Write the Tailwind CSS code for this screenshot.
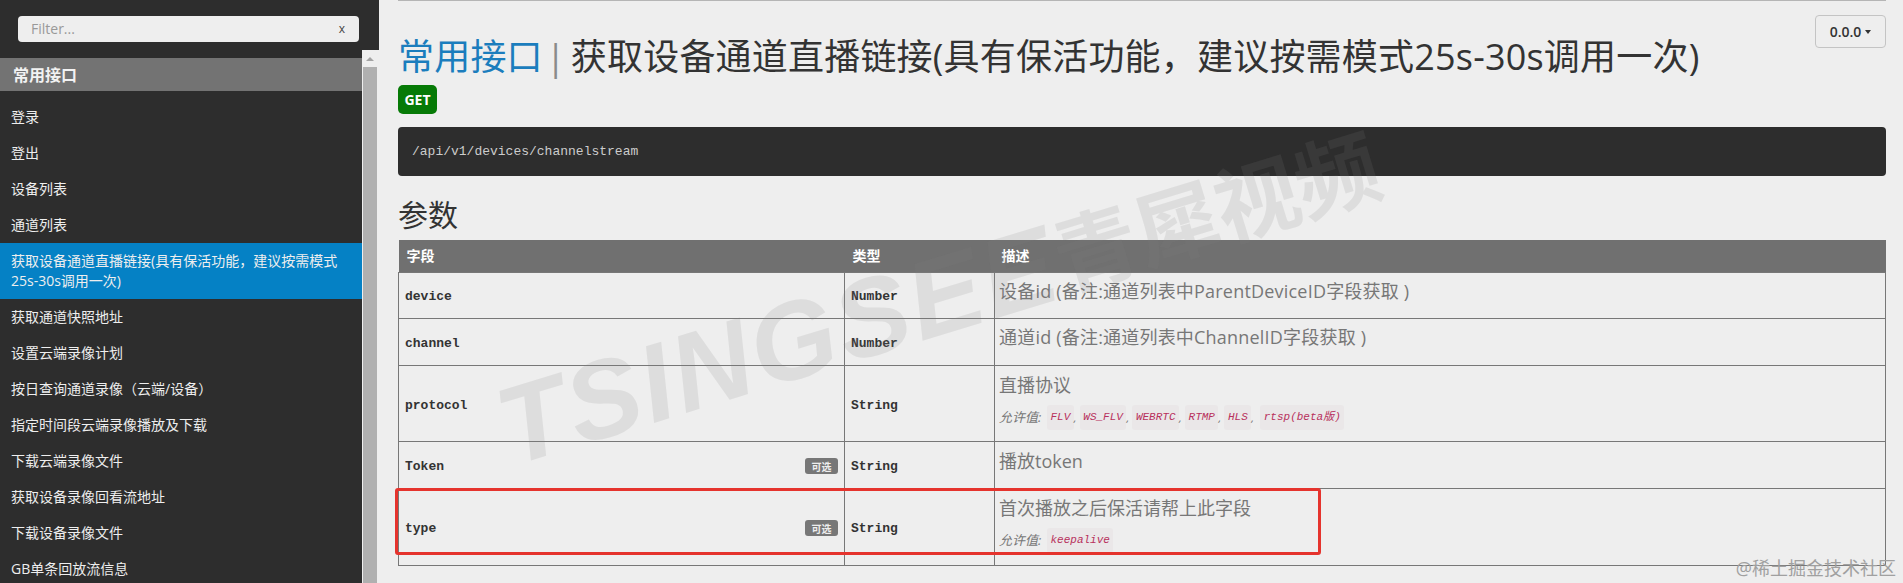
<!DOCTYPE html>
<html lang="zh-CN">
  <head>
    <meta charset="UTF-8" />
    <meta name="viewport" content="width=device-width, initial-scale=1.0" />
    <title>接口文档</title>
    <script src="https://cdn.jsdelivr.net/npm/@tailwindcss/browser@4"></script>
  </head>
  <body class="relative flex h-screen overflow-hidden bg-[#eeeeee] font-['Open_Sans','Noto_Sans_CJK_SC',sans-serif]">
    <!-- Sidebar -->
    <aside class="flex w-[379px] shrink-0 flex-col bg-[#2d2d2d]">
      <div class="h-[50px] shrink-0 pl-[18px] pr-[20px] pt-[16px]">
        <div class="flex h-[26px] items-center justify-between rounded-[4px] bg-[#eeeeee] pl-[13px] pr-[14px] text-sm">
          <span class="text-[#999999]">Filter...</span>
          <span class="text-xs text-[#444444]">x</span>
        </div>
      </div>
      <div class="flex min-h-0 flex-1">
        <nav class="min-w-0 flex-1 pt-[8px] text-sm leading-5 text-[#eeeeee]">
          <h2 class="flex h-[33px] items-center bg-[#737373] pl-[13px] text-base font-bold text-[#f2f2f2]">常用接口</h2>
          <ul class="pt-[8px]">
            <li class="px-[11px] py-2">登录</li>
            <li class="px-[11px] py-2">登出</li>
            <li class="px-[11px] py-2">设备列表</li>
            <li class="px-[11px] py-2">通道列表</li>
            <li class="bg-[#0581c5] px-[11px] py-2">获取设备通道直播链接(具有保活功能，建议按需模式<br />25s-30s调用一次)</li>
            <li class="px-[11px] py-2">获取通道快照地址</li>
            <li class="px-[11px] py-2">设置云端录像计划</li>
            <li class="px-[11px] py-2">按日查询通道录像（云端/设备）</li>
            <li class="px-[11px] py-2">指定时间段云端录像播放及下载</li>
            <li class="px-[11px] py-2">下载云端录像文件</li>
            <li class="px-[11px] py-2">获取设备录像回看流地址</li>
            <li class="px-[11px] py-2">下载设备录像文件</li>
            <li class="px-[11px] py-2">GB单条回放流信息</li>
          </ul>
        </nav>
        <!-- Scrollbar -->
        <div class="flex w-[17px] shrink-0 flex-col bg-[#eeeeee] pl-[1px] pr-[2px]">
          <div class="flex h-[17px] items-center justify-center">
            <div class="h-0 w-0 border-x-[4px] border-b-[4px] border-x-transparent border-b-[#a3a3a3]"></div>
          </div>
          <div class="flex-1 bg-[#b0b0b0]"></div>
        </div>
      </div>
    </aside>

    <!-- Main Content -->
    <main class="min-w-0 flex-1 pl-[19px] pr-[17px]">
      <article class="w-[1488px] border-t border-[#b5b5b5]">
        <button class="float-right mt-[14px] flex h-[33px] w-[71px] items-center justify-center gap-[4px] rounded-[4px] border border-[#c4c4c4] text-sm font-semibold text-[#333333]">
          0.0.0
          <span class="h-0 w-0 border-x-[3.5px] border-t-[4px] border-x-transparent border-t-[#333333]"></span>
        </button>
        <h1 class="pt-[36px] text-4xl leading-[40px] tracking-[0.2px] text-[#333333]"><span class="text-[#1b7dbd]">常用接口</span><span class="ml-[3px] mr-[5px] text-[#8a8a8a]">|</span>获取设备通道直播链接(具有保活功能，建议按需模式25s-30s调用一次)</h1>
        <div class="mt-[8px] flex h-[29px] w-[39px] items-center justify-center rounded-[5px] bg-[#067a06] text-sm font-bold text-white">GET</div>
        <pre class="mt-[13px] flex h-[49px] items-center rounded-[4px] bg-[#2d2d2d] pl-[14px] font-['Liberation_Mono',monospace] text-[13px] text-[#cccccc]">/api/v1/devices/channelstream</pre>

        <h2 class="mt-[21px] text-[30px] leading-[36px] text-[#333333]">参数</h2>
        <div class="relative mt-[7px]">
          <table class="w-full table-fixed border-collapse">
            <colgroup>
              <col class="w-[446px]" />
              <col class="w-[150px]" />
              <col />
            </colgroup>
            <thead>
              <tr class="h-[32px] bg-[#707070] text-left text-sm font-bold text-white">
                <th class="pl-[8px]">字段</th>
                <th class="pl-[8px]">类型</th>
                <th class="pl-[7px]">描述</th>
              </tr>
            </thead>
            <tbody class="text-[18px] leading-[25px] text-[#777777]">
              <tr class="h-[46px]">
                <td class="border border-[#777777] px-[6px] pt-[2px] font-['Liberation_Mono',monospace] text-[13px] font-bold text-[#333333]">device</td>
                <td class="border border-[#777777] px-[6px] pt-[2px] font-['Liberation_Mono',monospace] text-[13px] font-bold text-[#333333]">Number</td>
                <td class="border border-[#777777] px-[4px] pt-[6px] align-top tracking-[0.2px]">设备id (备注:通道列表中ParentDeviceID字段获取 )</td>
              </tr>
              <tr class="h-[47px]">
                <td class="border border-[#777777] px-[6px] pt-[3px] font-['Liberation_Mono',monospace] text-[13px] font-bold text-[#333333]">channel</td>
                <td class="border border-[#777777] px-[6px] pt-[3px] font-['Liberation_Mono',monospace] text-[13px] font-bold text-[#333333]">Number</td>
                <td class="border border-[#777777] px-[4px] pt-[6px] align-top tracking-[0.2px]">通道id (备注:通道列表中ChannelID字段获取 )</td>
              </tr>
              <tr class="h-[76px]">
                <td class="border border-[#777777] px-[6px] pt-[4px] font-['Liberation_Mono',monospace] text-[13px] font-bold text-[#333333]">protocol</td>
                <td class="border border-[#777777] px-[6px] pt-[4px] font-['Liberation_Mono',monospace] text-[13px] font-bold text-[#333333]">String</td>
                <td class="border border-[#777777] px-[4px] pt-[7px] align-top">
                  <p>直播协议</p>
                  <div class="mt-[11px] flex h-[18px] items-center text-[13px] italic">
                    <span class="w-[48px]">允许值:</span>
                    <code class="rounded-[3px] bg-[#eae7e8] px-[3.5px] font-['Liberation_Mono','Noto_Sans_CJK_SC',monospace] text-[11px] text-[#b8305c]">FLV</code><span class="w-[6px] text-[11px]">,</span>
                    <code class="rounded-[3px] bg-[#eae7e8] px-[3.5px] font-['Liberation_Mono','Noto_Sans_CJK_SC',monospace] text-[11px] text-[#b8305c]">WS_FLV</code><span class="w-[6px] text-[11px]">,</span>
                    <code class="rounded-[3px] bg-[#eae7e8] px-[3.5px] font-['Liberation_Mono','Noto_Sans_CJK_SC',monospace] text-[11px] text-[#b8305c]">WEBRTC</code><span class="w-[6px] text-[11px]">,</span>
                    <code class="rounded-[3px] bg-[#eae7e8] px-[3.5px] font-['Liberation_Mono','Noto_Sans_CJK_SC',monospace] text-[11px] text-[#b8305c]">RTMP</code><span class="w-[6px] text-[11px]">,</span>
                    <code class="rounded-[3px] bg-[#eae7e8] px-[3.5px] font-['Liberation_Mono','Noto_Sans_CJK_SC',monospace] text-[11px] text-[#b8305c]">HLS</code><span class="w-[9px] text-[11px]">,</span>
                    <code class="rounded-[3px] bg-[#eae7e8] px-[3.5px] font-['Liberation_Mono','Noto_Sans_CJK_SC',monospace] text-[11px] text-[#b8305c]">rtsp(beta版)</code>
                  </div>
                </td>
              </tr>
              <tr class="h-[47px]">
                <td class="border border-[#777777] px-[6px] font-['Liberation_Mono',monospace] text-[13px] font-bold text-[#333333]">
                  <div class="flex items-center justify-between pt-[3px]">Token<span class="flex h-[16px] w-[33px] items-center justify-center rounded-[3px] bg-[#777777] font-['Noto_Sans_CJK_SC',sans-serif] text-[10px] text-[#eeeeee]">可选</span></div>
                </td>
                <td class="border border-[#777777] px-[6px] pt-[3px] font-['Liberation_Mono',monospace] text-[13px] font-bold text-[#333333]">String</td>
                <td class="border border-[#777777] px-[4px] pt-[7px] align-top">播放token</td>
              </tr>
              <tr class="h-[77px]">
                <td class="border border-[#777777] px-[6px] font-['Liberation_Mono',monospace] text-[13px] font-bold text-[#333333]">
                  <div class="flex items-center justify-between pt-[3px]">type<span class="flex h-[16px] w-[33px] items-center justify-center rounded-[3px] bg-[#777777] font-['Noto_Sans_CJK_SC',sans-serif] text-[10px] text-[#eeeeee]">可选</span></div>
                </td>
                <td class="border border-[#777777] px-[6px] pt-[3px] font-['Liberation_Mono',monospace] text-[13px] font-bold text-[#333333]">String</td>
                <td class="border border-[#777777] px-[4px] pt-[7px] align-top">
                  <p>首次播放之后保活请帮上此字段</p>
                  <div class="mt-[11px] flex h-[18px] items-center text-[13px] italic">
                    <span class="w-[48px]">允许值:</span>
                    <code class="rounded-[3px] bg-[#eae7e8] px-[3.5px] font-['Liberation_Mono',monospace] text-[11px] text-[#b8305c]">keepalive</code>
                  </div>
                </td>
              </tr>
            </tbody>
          </table>
          <!-- Red annotation box -->
          <div class="absolute left-[-3px] top-[248px] h-[67px] w-[926px] rounded-[3px] border-[3px] border-[#e5332d]"></div>
        </div>
      </article>
    </main>

    <!-- Watermarks -->
    <div class="pointer-events-none absolute left-[939px] top-[296px] flex -translate-x-1/2 -translate-y-1/2 -rotate-[17deg] items-center whitespace-nowrap font-bold italic leading-none text-[#808080]/15">
      <span class="font-['Liberation_Sans',sans-serif] text-[110px] tracking-[3px]">TSINGSEE</span>
      <span class="text-[84px] not-italic">青犀视频</span>
    </div>
    <div class="pointer-events-none absolute bottom-[3px] right-[7px] text-[18px] leading-6 text-[#a0a0a0]">@稀土掘金技术社区</div>
  </body>
</html>
